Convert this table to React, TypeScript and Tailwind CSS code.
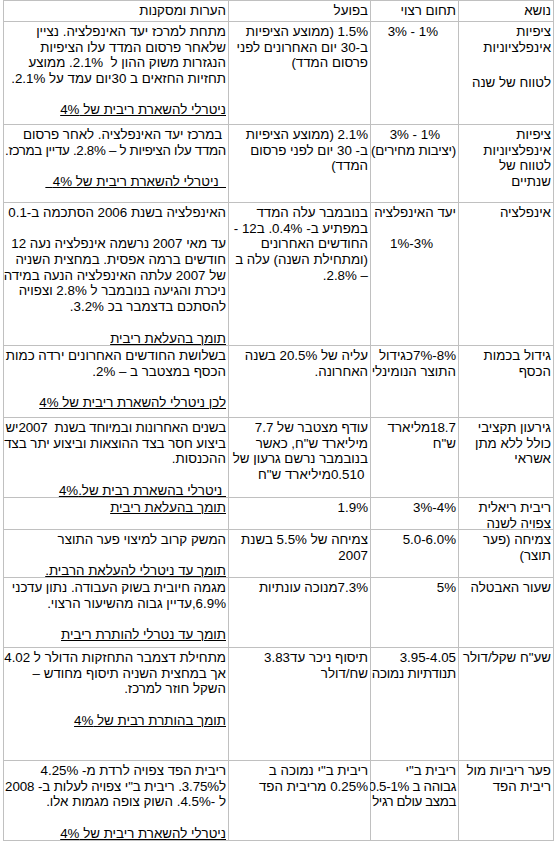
import React from 'react';

type Line = string | { t: string; u?: boolean; ltr?: boolean; cls?: string };

interface Row {
  topic: Line[];
  desired: Line[];
  actual: Line[];
  notes: Line[];
}

const U = (t: string): Line => ({ t, u: true });
const L = (t: string, cls = ''): Line => ({ t, ltr: true, cls });
const T = (t: string, cls: string): Line => ({ t, cls });

const header: Row = {
  topic: ['נושא'],
  desired: ['תחום רצוי'],
  actual: ['בפועל'],
  notes: ['הערות ומסקנות'],
};

const rows: Row[] = [
  {
    topic: ['ציפיות', 'אינפלציוניות', '', T('לטווח של שנה', 'mt-[4px]')],
    desired: [L('3% - 1%', 'pr-[18px]')],
    actual: ['1.5% (ממוצע הציפיות', 'ב-30 יום האחרונים לפני', 'פרסום המדד)'],
    notes: [
      'מתחת למרכז יעד האינפלציה. נציין',
      'שלאחר פרסום המדד עלו הציפיות',
      'הנגזרות משוק ההון ל  2.1%. ממוצע',
      'תחזיות החזאים ב 30יום עמד על 2.1%.',
      '',
      U('ניטרלי להשארת ריבית של 4%'),
    ],
  },
  {
    topic: ['ציפיות', 'אינפלציוניות', 'לטווח של', 'שנתיים'],
    desired: [L('3% - 1%', 'pr-[16px]'), T('(יציבות מחירים)', 'tracking-[-0.2px]')],
    actual: ['2.1% (ממוצע הציפיות', 'ב- 30 יום לפני פרסום', 'המדד)'],
    notes: [
      ' במרכז יעד האינפלציה. לאחר פרסום',
      T('המדד עלו הציפיות ל – 2.8%. עדיין במרכז.', 'tracking-[-0.3px]'),
      '',
      U('  ניטרלי להשארת ריבית של 4%  '),
    ],
  },
  {
    topic: ['אינפלציה'],
    desired: ['יעד האינפלציה', '', L('1%-3%', 'pr-[23px]')],
    actual: ['בנובמבר עלה המדד', 'במפתיע ב- 0.4%. ב12 -', 'החודשים האחרונים', '(ומתחילת השנה) עלה ב', '– 2.8%.'],
    notes: [
      'האינפלציה בשנת 2006 הסתכמה ב-0.1 ',
      '',
      'עד מאי 2007 נרשמה אינפלציה נעה 12',
      'חודשים ברמה אפסית. במחצית השניה',
      'של 2007 עלתה האינפלציה הנעה במידה',
      'ניכרת והגיעה בנובמבר ל 2.8% וצפויה',
      'להסתכם בדצמבר בכ 3.2%.',
      '',
      U('תומך בהעלאת ריבית'),
    ],
  },
  {
    topic: ['גידול בכמות', 'הכסף'],
    desired: ['8%-7%כגידול', 'התוצר הנומינלי'],
    actual: ['עליה של 20.5% בשנה', 'האחרונה.'],
    notes: ['בשלושת החודשים האחרונים ירדה כמות', 'הכסף במצטבר ב – 2%.', '', U('לכן ניטרלי להשארת ריבית של 4%')],
  },
  {
    topic: ['גירעון תקציבי', 'כולל ללא מתן', 'אשראי'],
    desired: ['18.7מליארד', 'ש"ח'],
    actual: ['עודף מצטבר של 7.7', 'מיליארד ש"ח, כאשר', 'בנובמבר נרשם גרעון של', ' 0.510מיליארד ש"ח'],
    notes: [
      T('בשנים האחרונות ובמיוחד בשנת  2007יש', 'tracking-[-0.15px]'),
      T('ביצוע חסר בצד ההוצאות וביצוע יתר בצד', 'tracking-[-0.05px]'),
      'ההכנסות.',
      '',
      U(' ניטרלי בהשארת רבית של.4%'),
    ],
  },
  {
    topic: ['ריבית ריאלית', 'צפויה לשנה'],
    desired: [L('3%-4%')],
    actual: ['1.9%'],
    notes: [U('תומך בהעלאת ריבית')],
  },
  {
    topic: ['צמיחה (פער', 'תוצר)'],
    desired: [L('5.0-6.0%')],
    actual: ['צמיחה של 5.5% בשנת', '2007'],
    notes: ['המשק קרוב למיצוי פער התוצר', '', U('תומך עד ניטרלי להעלאת הרבית.')],
  },
  {
    topic: ['שעור האבטלה'],
    desired: ['5%'],
    actual: ['7.3%מנוכה עונתיות'],
    notes: ['מגמה חיובית בשוק העבודה. נתון עדכני', '6.9%,עדיין גבוה מהשיעור הרצוי.', '', U('תומך עד נטרלי להותרת ריבית')],
  },
  {
    topic: ['שע"ח שקל/דולר'],
    desired: ['3.95-4.05', T('תנודתיות נמוכה', 'tracking-[-0.2px]')],
    actual: ['תיסוף ניכר עד3.83', 'שח/דולר'],
    notes: ['מתחילת דצמבר התחזקות הדולר ל 4.02', 'אך במחצית השניה תיסוף מחודש –', 'השקל חוזר למרכז.', '', U('תומך בהותרת רבית של 4%')],
  },
  {
    topic: ['פער ריביות מול', 'ריבית הפד'],
    desired: ['ריבית ב"י', T('גבוהה ב 0.5-1%', 'tracking-[-0.3px]'), T('במצב עולם רגיל', 'tracking-[-0.4px]')],
    actual: ['ריבית ב"י נמוכה ב', '0.25% מריבית הפד'],
    notes: [
      'ריבית הפד צפויה לרדת מ- 4.25%',
      T('ל3.75%. ריבית ב"י צפויה לעלות ב- 2008', 'tracking-[-0.1px]'),
      'ל -4.5%. השוק צופה מגמות אלו.',
      '',
      U('ניטרלי להשארת ריבית של 4%'),
    ],
  },
];

const Cell: React.FC<{ lines: Line[] }> = ({ lines }) => (
  <div className="bg-white px-[2px] pt-[2px] text-right">
    {lines.map((ln, i) => {
      const o = typeof ln === 'string' ? { t: ln } : ln;
      return (
        <div key={i} className={`h-[15.7px] whitespace-pre ${o.u ? 'underline' : ''} ${o.cls ?? ''}`}>
          {o.ltr ? <span dir="ltr">{o.t}</span> : o.t || '\u00a0'}
        </div>
      );
    })}
  </div>
);

export default function App() {
  return (
    <div className="min-h-screen bg-white pl-[3px] font-['Liberation_Sans',Arial,sans-serif] text-[13.33px] leading-[15.7px] text-black">
      <div
        dir="rtl"
        className="grid w-[551px] grid-cols-[94px_87px_141px_224px] grid-rows-[20px_102px_77px_142px_71px_79px_31px_47px_69px_112px_79px] gap-px bg-[#c0c0c0] p-px"
      >
        {[header, ...rows].map((r, i) => (
          <React.Fragment key={i}>
            <Cell lines={r.topic} />
            <Cell lines={r.desired} />
            <Cell lines={r.actual} />
            <Cell lines={r.notes} />
          </React.Fragment>
        ))}
      </div>
    </div>
  );
}
